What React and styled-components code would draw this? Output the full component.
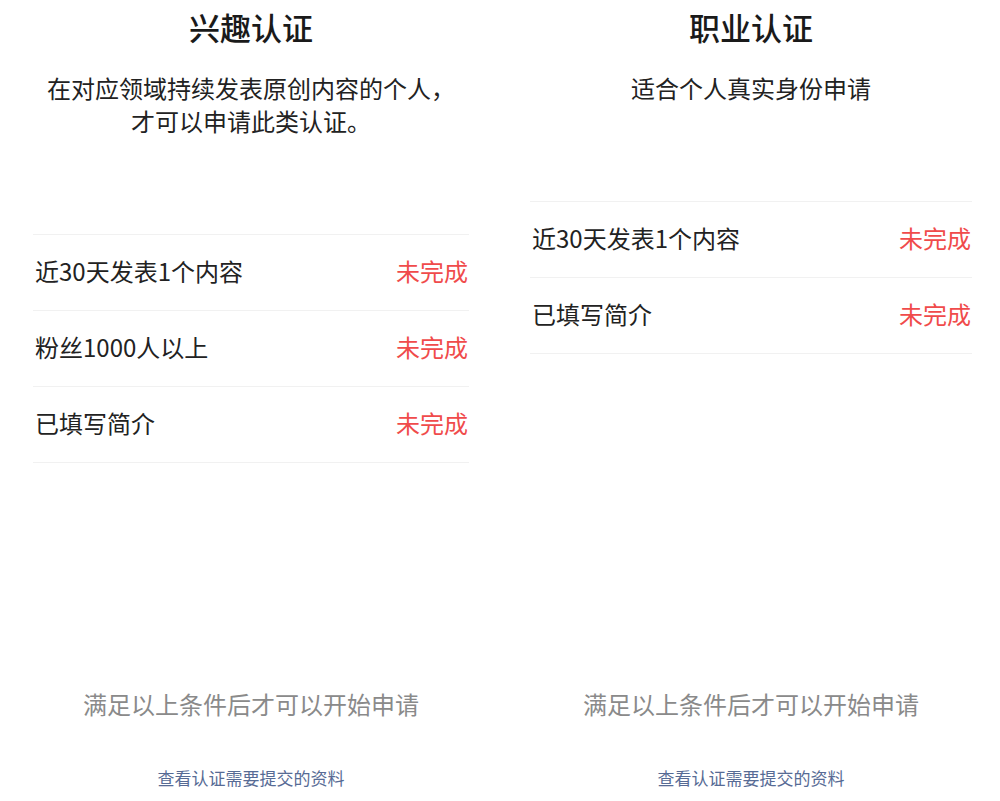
import React from "react";
import styled, { createGlobalStyle } from "styled-components";

const Global = createGlobalStyle`
  html, body { margin: 0; padding: 0; background: #fff; }
  body {
    font-family: "Noto Sans CJK SC", "Noto Sans", "Liberation Sans", sans-serif;
    color: #1f1f1f;
  }
`;

const Page = styled.div`
  display: grid;
  grid-template-columns: 500px 500px;
  width: 1000px;
  height: 801px;
  overflow: hidden;
`;

const Panel = styled.section`
  display: flex;
  flex-direction: column;
  align-items: stretch;
  padding: 7px ${(p) => p.$right}px 11px ${(p) => p.$left}px;
  box-sizing: border-box;
  height: 801px;
`;

const Title = styled.h1`
  margin: 0;
  font-size: 31px;
  line-height: 40px;
  font-weight: 500;
  text-align: center;
  color: #1a1a1a;
`;

const Subtitle = styled.p`
  margin: 24px 0 0;
  font-size: 24px;
  line-height: 33px;
  text-align: center;
  color: #222;
`;

const List = styled.ul`
  list-style: none;
  margin: 97px 0 0;
  padding: 0;
  border-top: 1px solid #f1f1f1;
`;

const Row = styled.li`
  display: flex;
  align-items: center;
  justify-content: space-between;
  box-sizing: border-box;
  height: 76px;
  padding: 0 1px 5px 2px;
  border-bottom: 1px solid #f1f1f1;
  font-size: 24px;
  color: #222;
`;

const Status = styled.span`
  color: #f04b4b;
`;

const Footer = styled.div`
  margin-top: auto;
  display: flex;
  flex-direction: column;
  align-items: center;
`;

const Hint = styled.p`
  margin: 0;
  font-size: 24px;
  line-height: 33px;
  color: #8a8a8a;
`;

const Link = styled.a`
  margin-top: 46px;
  font-size: 17px;
  line-height: 24px;
  color: #576b95;
  text-decoration: none;
`;

const panels = [
  {
    title: "兴趣认证",
    desc: ["在对应领域持续发表原创内容的个人，", "才可以申请此类认证。"],
    items: ["近30天发表1个内容", "粉丝1000人以上", "已填写简介"],
    left: 33,
    right: 31,
  },
  {
    title: "职业认证",
    desc: ["适合个人真实身份申请"],
    items: ["近30天发表1个内容", "已填写简介"],
    left: 30,
    right: 28,
  },
];

export default function App() {
  return (
    <>
      <Global />
      <Page>
        {panels.map((p) => (
          <Panel key={p.title} $left={p.left} $right={p.right}>
            <Title>{p.title}</Title>
            <Subtitle>
              {p.desc.map((line, i) => (
                <React.Fragment key={i}>
                  {i > 0 && <br />}
                  {line}
                </React.Fragment>
              ))}
            </Subtitle>
            <List>
              {p.items.map((it) => (
                <Row key={it}>
                  <span>{it}</span>
                  <Status>未完成</Status>
                </Row>
              ))}
            </List>
            <Footer>
              <Hint>满足以上条件后才可以开始申请</Hint>
              <Link href="#">查看认证需要提交的资料</Link>
            </Footer>
          </Panel>
        ))}
      </Page>
    </>
  );
}
